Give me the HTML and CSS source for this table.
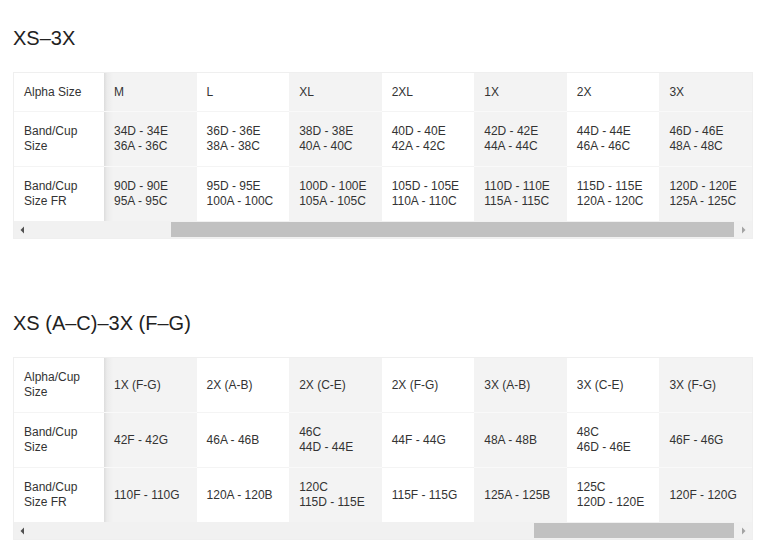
FILE: index.html
```html
<!DOCTYPE html>
<html>
<head>
<meta charset="utf-8">
<link rel="stylesheet" href="styles.css">
</head>
<body>
<div class="page">
  <section class="section">
    <h2 class="title">XS–3X</h2>
    <div class="scroller">
      <table class="sizes">
        <colgroup><col class="label-col"><col><col><col><col><col><col><col></colgroup>
        <tr class="single"><td>Alpha Size</td><td>M</td><td>L</td><td>XL</td><td>2XL</td><td>1X</td><td>2X</td><td>3X</td></tr>
        <tr><td>Band/Cup<br>Size</td><td>34D - 34E<br>36A - 36C</td><td>36D - 36E<br>38A - 38C</td><td>38D - 38E<br>40A - 40C</td><td>40D - 40E<br>42A - 42C</td><td>42D - 42E<br>44A - 44C</td><td>44D - 44E<br>46A - 46C</td><td>46D - 46E<br>48A - 48C</td></tr>
        <tr><td>Band/Cup<br>Size FR</td><td>90D - 90E<br>95A - 95C</td><td>95D - 95E<br>100A - 100C</td><td>100D - 100E<br>105A - 105C</td><td>105D - 105E<br>110A - 110C</td><td>110D - 110E<br>115A - 115C</td><td>115D - 115E<br>120A - 120C</td><td>120D - 120E<br>125A - 125C</td></tr>
      </table>
      <div class="sb">
        <div class="arrow"><svg width="5" height="8" viewBox="0 0 5 8"><path d="M4 0.5 L0.5 4 L4 7.5 Z" fill="#505050"/></svg></div>
        <div class="track"><div class="thumb" style="margin-left:140px;width:563px"></div></div>
        <div class="arrow"><svg width="5" height="8" viewBox="0 0 5 8"><path d="M1 0.5 L4.5 4 L1 7.5 Z" fill="#a3a3a3"/></svg></div>
      </div>
    </div>
  </section>
  <section class="section">
    <h2 class="title">XS (A–C)–3X (F–G)</h2>
    <div class="scroller">
      <table class="sizes">
        <colgroup><col class="label-col"><col><col><col><col><col><col><col></colgroup>
        <tr><td>Alpha/Cup<br>Size</td><td>1X (F-G)</td><td>2X (A-B)</td><td>2X (C-E)</td><td>2X (F-G)</td><td>3X (A-B)</td><td>3X (C-E)</td><td>3X (F-G)</td></tr>
        <tr><td>Band/Cup<br>Size</td><td>42F - 42G</td><td>46A - 46B</td><td>46C<br>44D - 44E</td><td>44F - 44G</td><td>48A - 48B</td><td>48C<br>46D - 46E</td><td>46F - 46G</td></tr>
        <tr><td>Band/Cup<br>Size FR</td><td>110F - 110G</td><td>120A - 120B</td><td>120C<br>115D - 115E</td><td>115F - 115G</td><td>125A - 125B</td><td>125C<br>120D - 120E</td><td>120F - 120G</td></tr>
      </table>
      <div class="sb">
        <div class="arrow"><svg width="5" height="8" viewBox="0 0 5 8"><path d="M4 0.5 L0.5 4 L4 7.5 Z" fill="#505050"/></svg></div>
        <div class="track"><div class="thumb" style="margin-left:503px;width:200px"></div></div>
        <div class="arrow"><svg width="5" height="8" viewBox="0 0 5 8"><path d="M1 0.5 L4.5 4 L1 7.5 Z" fill="#a3a3a3"/></svg></div>
      </div>
    </div>
  </section>
</div>
</body>
</html>
```
FILE: styles.css
```css
html, body {
  margin: 0;
  padding: 0;
  background: #ffffff;
}
body {
  font-family: "Liberation Sans", Arial, sans-serif;
  color: #333333;
}
.page {
  padding: 0 15px 0 13px;
}
.title {
  margin: 26px 0 22px;
  font-size: 20px;
  line-height: 24px;
  font-weight: normal;
  color: #222222;
}
.section + .section .title {
  margin-top: 72px;
}
.scroller {
  border: 1px solid #efefef;
}
.sizes {
  width: 100%;
  border-collapse: collapse;
  table-layout: fixed;
}
.label-col {
  width: 90px;
}
.sizes td {
  padding: 12px 10px;
  font-size: 12px;
  line-height: 15px;
  vertical-align: middle;
  text-align: left;
  border-bottom: 1px solid #f4f4f4;
  background: #ffffff;
  white-space: nowrap;
}
.sizes .single td {
  padding-bottom: 11px;
}
.sizes tr:last-child td {
  border-bottom: none;
}
.sizes td:nth-child(even) {
  background: #f3f3f3;
  border-bottom-color: #f9f9f9;
}
.sizes td:nth-child(2) {
  background: linear-gradient(to right, #dcdcdc 0, #ebebeb 3px, #f3f3f3 9px);
}
.sb {
  display: flex;
  height: 17px;
  background: #f1f1f1;
}
.arrow {
  width: 17px;
  display: flex;
  align-items: center;
  justify-content: center;
}
.track {
  flex: 1;
  display: flex;
  padding: 1px 0;
}
.thumb {
  background: #c1c1c1;
}
```
